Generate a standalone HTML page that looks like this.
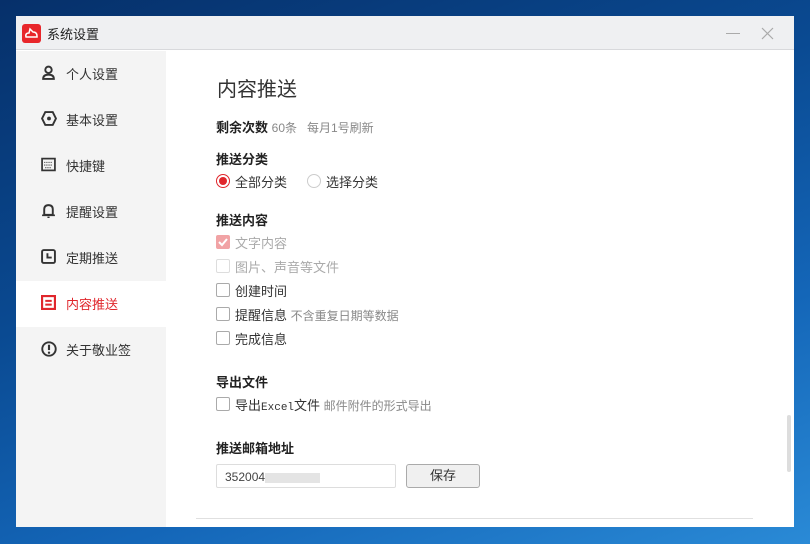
<!DOCTYPE html>
<html><head><meta charset="utf-8"><style>
*{margin:0;padding:0;box-sizing:border-box}
body{width:810px;height:544px;overflow:hidden;position:relative;font-family:"Liberation Sans","Noto Sans CJK SC",sans-serif;font-size:13px;color:#333;
background:linear-gradient(160deg,#06306a 0%,#0a4a92 40%,#1466b8 70%,#2a8ad6 100%)}
.win{position:absolute;left:16px;top:16px;width:778px;height:511px;background:#fff;overflow:hidden}
.title{position:absolute;left:0;top:0;width:778px;height:34px;background:#eff0f2;border-bottom:1px solid #d8d9dc}
.logo{position:absolute;left:6px;top:8px;width:19px;height:19px;background:#e8262b;border-radius:3px}
.ttxt{position:absolute;left:31px;top:8px;font-size:13px;color:#222}
.side{position:absolute;left:0;top:35px;width:150px;height:476px;background:#f4f4f4}
.item{position:absolute;left:0;width:150px;height:46px;font-size:13px;color:#333}
.item span{position:absolute;left:50px;top:13px}
.item svg{position:absolute;left:25px;top:14px}
.item.act{background:#fff;color:#e0262c}
.main{position:absolute;left:150px;top:35px;right:0;bottom:0}
.a{position:absolute;white-space:nowrap}
.h{font-weight:bold;font-size:13px;color:#222}
.g{color:#888;font-size:12px}
.cb{position:absolute;width:14px;height:14px;border:1px solid #aaa;border-radius:2px;background:#fff}
</style></head><body>
<div class="win">
 <div class="title">
  <div class="logo"><svg width="19" height="19" viewBox="0 0 19 19"><path d="M4 13 Q3 9 7 9 L8 5 L11 8 Q15 8 15 12 L15 13 Z" fill="none" stroke="#fff" stroke-width="1.5"/></svg></div>
  <div class="ttxt">系统设置</div>
  <div style="position:absolute;left:710px;top:17px;width:14px;height:1px;background:#aaa"></div>
  <svg style="position:absolute;left:745px;top:11px" width="13" height="13"><path d="M1 1L12 12M12 1L1 12" stroke="#aaa" stroke-width="1.2"/></svg>
 </div>
 <div class="side">
  <div class="item" style="top:0"><svg width="15" height="15" viewBox="0 0 14 14"><circle cx="7" cy="4.5" r="3" fill="none" stroke="#333" stroke-width="1.8"/><path d="M2 13Q2 9 7 9Q12 9 12 13Z" fill="none" stroke="#333" stroke-width="1.8"/></svg><span>个人设置</span></div>
  <div class="item" style="top:46px"><svg width="16" height="15" viewBox="0 0 15 14"><path d="M4 1H11L14 7L11 13H4L1 7Z" fill="none" stroke="#333" stroke-width="1.8"/><circle cx="7.5" cy="7" r="1.8" fill="#333"/></svg><span>基本设置</span></div>
  <div class="item" style="top:92px"><svg width="15" height="15" viewBox="0 0 14 14"><rect x="1" y="1.5" width="12" height="11" fill="none" stroke="#333" stroke-width="1.6"/><path d="M3 5H11M3 7.5H11M4 10H10" stroke="#333" stroke-width="1" stroke-dasharray="1 1"/></svg><span>快捷键</span></div>
  <div class="item" style="top:138px"><svg width="15" height="15" viewBox="0 0 14 14"><path d="M3 11V6Q3 2 7 2Q11 2 11 6V11Z" fill="none" stroke="#333" stroke-width="1.8"/><path d="M1 11.5H13M6 13.5H8" stroke="#333" stroke-width="1.6"/></svg><span>提醒设置</span></div>
  <div class="item" style="top:184px"><svg width="15" height="15" viewBox="0 0 14 14"><rect x="1" y="1" width="12" height="12" rx="1.5" fill="none" stroke="#333" stroke-width="1.8"/><path d="M6 4V8H10" fill="none" stroke="#333" stroke-width="1.8"/></svg><span>定期推送</span></div>
  <div class="item act" style="top:230px"><svg width="15" height="15" viewBox="0 0 14 14"><rect x="1" y="1" width="12" height="12" fill="none" stroke="#e0262c" stroke-width="2"/><path d="M4 5.5H10M4 9H10" stroke="#e0262c" stroke-width="1.8"/></svg><span>内容推送</span></div>
  <div class="item" style="top:276px"><svg width="16" height="16" viewBox="0 0 15 15"><circle cx="7.5" cy="7.5" r="6.3" fill="none" stroke="#333" stroke-width="1.8"/><path d="M7.5 3.5V8.5" stroke="#333" stroke-width="2"/><circle cx="7.5" cy="11" r="1.1" fill="#333"/></svg><span>关于敬业签</span></div>
 </div>
 <div class="main">
  <div class="a" style="left:51px;top:22px;font-size:20px;color:#333">内容推送</div>
  <div class="a" style="left:50px;top:66px"><b class="h">剩余次数</b> <span class="g">60条 &nbsp; 每月1号刷新</span></div>
  <div class="a h" style="left:50px;top:98px">推送分类</div>
  <div class="a" style="left:50px;top:123px;width:14px;height:14px;border:1px solid #e0262c;border-radius:50%"><div style="margin:2px;width:8px;height:8px;border-radius:50%;background:#e0262c"></div></div>
  <div class="a" style="left:69px;top:121px">全部分类</div>
  <div class="a" style="left:141px;top:123px;width:14px;height:14px;border:1px solid #ccc;border-radius:50%"></div>
  <div class="a" style="left:160px;top:121px">选择分类</div>
  <div class="a h" style="left:50px;top:159px">推送内容</div>
  <div class="cb" style="left:50px;top:184px;border-color:#f1a3a5;background:#f1a3a5"><svg width="12" height="12" style="position:absolute;left:0;top:0"><path d="M2 6L5 9L10 3" fill="none" stroke="#fff" stroke-width="2"/></svg></div>
  <div class="a" style="left:69px;top:182px;color:#aaa">文字内容</div>
  <div class="cb" style="left:50px;top:208px;border-color:#ddd"></div>
  <div class="a" style="left:69px;top:206px;color:#aaa">图片、声音等文件</div>
  <div class="cb" style="left:50px;top:232px"></div>
  <div class="a" style="left:69px;top:230px">创建时间</div>
  <div class="cb" style="left:50px;top:256px"></div>
  <div class="a" style="left:69px;top:254px">提醒信息 <span class="g">不含重复日期等数据</span></div>
  <div class="cb" style="left:50px;top:280px"></div>
  <div class="a" style="left:69px;top:278px">完成信息</div>
  <div class="a h" style="left:50px;top:321px">导出文件</div>
  <div class="cb" style="left:50px;top:346px"></div>
  <div class="a" style="left:69px;top:344px">导出<span style="font-family:'Liberation Mono',monospace;font-size:11px">Excel</span>文件 <span class="g">邮件附件的形式导出</span></div>
  <div class="a h" style="left:50px;top:387px">推送邮箱地址</div>
  <div class="a" style="left:50px;top:413px;width:180px;height:24px;border:1px solid #ddd;border-radius:2px;font-size:12px;padding:5px 8px;color:#444">352004<span style="display:inline-block;width:55px;height:10px;background:#e4e4e4;vertical-align:middle"></span></div>
  <div class="a" style="left:240px;top:413px;width:74px;height:24px;border:1px solid #aaa;border-radius:3px;background:#f0f0f0;text-align:center;line-height:22px">保存</div>
  <div class="a" style="left:621px;top:364px;width:4px;height:57px;background:#ddd;border-radius:2px"></div>
  <div class="a" style="left:30px;top:467px;width:557px;height:1px;background:#e0e0e0"></div>
 </div>
</div>
</body></html>
